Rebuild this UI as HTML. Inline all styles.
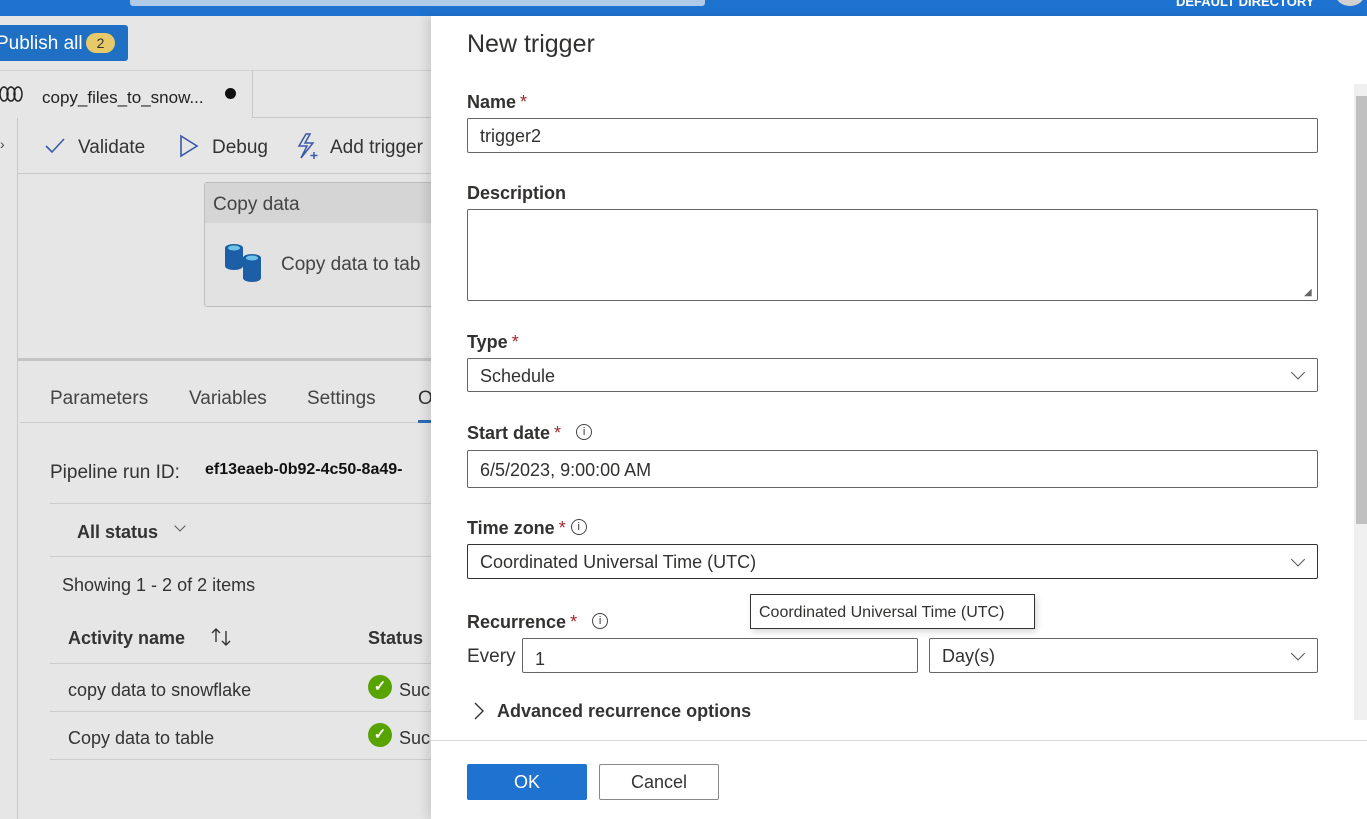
<!DOCTYPE html>
<html><head><meta charset="utf-8"><style>
*{box-sizing:border-box;margin:0;padding:0}
body{width:1367px;height:819px;overflow:hidden;position:relative;background:#e6e6e6;font-family:"Liberation Sans",sans-serif;color:#323130}
.a{position:absolute;white-space:nowrap}
.lbl{font-size:18px;font-weight:bold;color:#323130}
.req{color:#a4262c;font-weight:normal;margin-left:4px}
.inp{position:absolute;border:1px solid #666;border-radius:2px;background:#fff;font-size:18px;padding-left:12px;padding-top:2px;display:flex;align-items:center}
.chev{position:absolute;right:14px;top:50%;width:10px;height:10px;border-right:1.3px solid #555;border-bottom:1.3px solid #555;transform:translateY(-75%) rotate(45deg)}
.info{display:inline-block;width:16px;height:16px;border:1px solid #444;border-radius:50%;font-size:11px;text-align:center;line-height:14px;font-weight:normal;vertical-align:4px}
</style></head><body>
<div class="a" style="left:0;top:0;width:1367px;height:16px;background:#1f73d0"></div>
<div class="a" style="left:130px;top:0;width:575px;height:6px;background:#b0cbe9;border-radius:0 0 3px 3px"></div>
<div class="a" style="left:1176px;top:-6px;font-size:13px;font-weight:bold;color:#fff">DEFAULT DIRECTORY</div>
<div class="a" style="left:1335px;top:-20px;width:30px;height:26px;border-radius:50%;background:#d0d0d0"></div>
<div class="a" style="left:0;top:25px;width:128px;height:36px;background:#1f6fc5;border-radius:0 3px 3px 0;color:#fff;font-size:19px;padding:8px 0 0 0">
<span style="margin-left:-4px">Publish all</span></div>
<div class="a" style="left:86px;top:33px;width:29px;height:20px;background:#e6c968;border-radius:10px;font-size:14px;text-align:center;line-height:20px;color:#333">2</div>
<div class="a" style="left:0;top:70px;width:431px;height:1px;background:#d0d0d0"></div>
<div class="a" style="left:252px;top:70px;width:1px;height:48px;background:#c8c8c8"></div>
<div class="a" style="left:252px;top:117px;width:180px;height:1px;background:#c8c8c8"></div>
<svg class="a" style="left:0;top:85px" width="26" height="18"><g fill="none" stroke="#222" stroke-width="1.5"><ellipse cx="4" cy="9" rx="4" ry="7"/><ellipse cx="11" cy="9" rx="4" ry="7"/><ellipse cx="18" cy="9" rx="4" ry="7"/></g></svg>
<div class="a" style="left:42px;top:88px;font-size:17px;color:#222">copy_files_to_snow...</div>
<div class="a" style="left:225px;top:88px;width:11px;height:11px;border-radius:50%;background:#111"></div>
<div class="a" style="left:0;top:118px;width:18px;height:701px;border-right:1px solid #c8c8c8"></div>
<div class="a" style="left:0;top:136px;font-size:14px;color:#444">›</div>
<svg class="a" style="left:44px;top:137px" width="22" height="18"><path d="M2 9l6 6L20 2" fill="none" stroke="#3a5aa8" stroke-width="1.6"/></svg>
<div class="a" style="left:78px;top:137px;font-size:19px;color:#333">Validate</div>
<svg class="a" style="left:178px;top:134px" width="22" height="24"><path d="M3 2L19 12L3 22Z" fill="none" stroke="#3a5aa8" stroke-width="1.6"/></svg>
<div class="a" style="left:212px;top:137px;font-size:19px;color:#333">Debug</div>
<svg class="a" style="left:296px;top:133px" width="26" height="28"><path d="M10 1L3 13h8L5 25L17 10h-8l5-9z" fill="none" stroke="#3a5aa8" stroke-width="1.5"/><path d="M18 19v7M14.5 22.5h7" stroke="#3a5aa8" stroke-width="1.5"/></svg>
<div class="a" style="left:330px;top:137px;font-size:19px;color:#333">Add trigger</div>
<div class="a" style="left:18px;top:173px;width:413px;height:1px;background:#c8c8c8"></div>
<div class="a" style="left:204px;top:182px;width:230px;height:125px;background:#e2e2e2;border:1px solid #bdbdbd;border-radius:3px"></div>
<div class="a" style="left:205px;top:183px;width:228px;height:40px;background:#d5d5d5"></div>
<div class="a" style="left:213px;top:194px;font-size:19px;color:#444">Copy data</div>
<svg class="a" style="left:223px;top:242px" width="40" height="42"><ellipse cx="11" cy="6" rx="9" ry="4" fill="#1d5fa6"/><rect x="2" y="6" width="18" height="18" fill="#1d5fa6"/><ellipse cx="11" cy="6" rx="6" ry="2.5" fill="#6ec4e8"/><ellipse cx="11" cy="24" rx="9" ry="4" fill="#1d5fa6"/><ellipse cx="29" cy="16" rx="9" ry="4" fill="#1d5fa6"/><rect x="20" y="16" width="18" height="20" fill="#1d5fa6"/><ellipse cx="29" cy="36" rx="9" ry="4" fill="#1d5fa6"/><ellipse cx="29" cy="16" rx="6" ry="2.5" fill="#6ec4e8"/></svg>
<div class="a" style="left:281px;top:254px;font-size:19px;color:#444">Copy data to tab</div>
<div class="a" style="left:18px;top:358px;width:413px;height:3px;background:#c4c4c4"></div>
<div class="a" style="left:50px;top:388px;font-size:19px;color:#444">Parameters</div>
<div class="a" style="left:189px;top:388px;font-size:19px;color:#444">Variables</div>
<div class="a" style="left:307px;top:388px;font-size:19px;color:#444">Settings</div>
<div class="a" style="left:418px;top:388px;font-size:19px;color:#333">O</div>
<div class="a" style="left:20px;top:422px;width:411px;height:1px;background:#ccc"></div>
<div class="a" style="left:418px;top:420px;width:13px;height:3px;background:#2d6bb5"></div>
<div class="a" style="left:50px;top:462px;font-size:19px;color:#333">Pipeline run ID:</div>
<div class="a" style="left:205px;top:461px;font-size:16px;font-weight:bold;color:#111">ef13eaeb-0b92-4c50-8a49-</div>
<div class="a" style="left:50px;top:503px;width:381px;height:1px;background:#ccc"></div>
<div class="a" style="left:77px;top:522px;font-size:18px;font-weight:bold;color:#333">All status</div>
<div class="a" style="left:176px;top:522px;width:8px;height:8px;border-right:1px solid #555;border-bottom:1px solid #555;transform:rotate(45deg)"></div>
<div class="a" style="left:50px;top:556px;width:381px;height:1px;background:#ccc"></div>
<div class="a" style="left:62px;top:575px;font-size:18px;color:#333">Showing 1 - 2 of 2 items</div>
<div class="a" style="left:68px;top:628px;font-size:18px;font-weight:bold;color:#333">Activity name</div>
<svg class="a" style="left:210px;top:627px" width="24" height="20"><path d="M6 15V2M2 6l4-4 4 4M16 4v14M12 14l4 4 4-4" fill="none" stroke="#333" stroke-width="1.4"/></svg>
<div class="a" style="left:368px;top:628px;font-size:18px;font-weight:bold;color:#333">Status</div>
<div class="a" style="left:50px;top:663px;width:381px;height:1px;background:#ccc"></div>
<div class="a" style="left:68px;top:680px;font-size:18px;color:#333">copy data to snowflake</div>
<div class="a" style="left:50px;top:711px;width:381px;height:1px;background:#ccc"></div>
<div class="a" style="left:68px;top:728px;font-size:18px;color:#333">Copy data to table</div>
<div class="a" style="left:50px;top:759px;width:381px;height:1px;background:#ccc"></div>
<div class="a" style="left:368px;top:675px;width:24px;height:24px;border-radius:50%;background:#57a300;color:#fff;font-size:15px;text-align:center;line-height:24px;font-weight:bold">✓</div>
<div class="a" style="left:399px;top:680px;font-size:18px;color:#333">Suc</div>
<div class="a" style="left:368px;top:723px;width:24px;height:24px;border-radius:50%;background:#57a300;color:#fff;font-size:15px;text-align:center;line-height:24px;font-weight:bold">✓</div>
<div class="a" style="left:399px;top:728px;font-size:18px;color:#333">Suc</div>
<div class="a" style="left:431px;top:16px;width:936px;height:803px;background:#fff;box-shadow:-4px 0 10px rgba(0,0,0,.12)"></div>
<div class="a" style="left:467px;top:30px;font-size:25px;color:#323130">New trigger</div>
<div class="a lbl" style="left:467px;top:92px">Name<span class="req">*</span></div>
<div class="inp" style="left:467px;top:118px;width:851px;height:35px">trigger2</div>
<div class="a lbl" style="left:467px;top:183px">Description</div>
<div class="inp" style="left:467px;top:209px;width:851px;height:92px"></div>
<div class="a" style="left:1304px;top:287px;font-size:10px;color:#666">◢</div>
<div class="a lbl" style="left:467px;top:332px">Type<span class="req">*</span></div>
<div class="inp" style="left:467px;top:358px;width:851px;height:34px">Schedule<div class="chev"></div></div>
<div class="a lbl" style="left:467px;top:423px">Start date<span class="req">*</span>&nbsp;&nbsp;&nbsp;<span class="info">i</span></div>
<div class="inp" style="left:467px;top:450px;width:851px;height:38px">6/5/2023, 9:00:00 AM</div>
<div class="a lbl" style="left:467px;top:518px">Time zone<span class="req">*</span>&nbsp;<span class="info">i</span></div>
<div class="inp" style="left:467px;top:544px;width:851px;height:35px;border-color:#333">Coordinated Universal Time (UTC)<div class="chev"></div></div>
<div class="a lbl" style="left:467px;top:612px">Recurrence<span class="req">*</span>&nbsp;&nbsp;&nbsp;<span class="info">i</span></div>
<div class="a" style="left:750px;top:594px;width:285px;height:35px;border:1px solid #333;background:#fff;font-size:16px;padding:9px 0 0 8px;box-shadow:2px 3px 6px rgba(0,0,0,.15)">Coordinated Universal Time (UTC)</div>
<div class="a" style="left:467px;top:646px;font-size:19px;color:#333">Every</div>
<div class="inp" style="left:522px;top:638px;width:396px;height:35px"><span style="margin-top:6px">1</span></div>
<div class="inp" style="left:929px;top:638px;width:389px;height:35px">Day(s)<div class="chev"></div></div>
<svg class="a" style="left:472px;top:701px" width="14" height="20"><path d="M3 2l8 8-8 8" fill="none" stroke="#333" stroke-width="1.4"/></svg>
<div class="a" style="left:497px;top:701px;font-size:18px;font-weight:bold;color:#333">Advanced recurrence options</div>
<div class="a" style="left:1354px;top:84px;width:13px;height:636px;background:#f0f0f0"></div>
<div class="a" style="left:1356px;top:96px;width:11px;height:428px;background:#c0c0c0"></div>
<div class="a" style="left:431px;top:740px;width:936px;height:1px;background:#d8d8d8"></div>
<div class="a" style="left:467px;top:764px;width:120px;height:36px;background:#1f73d0;border-radius:2px;color:#fff;font-size:18px;text-align:center;line-height:36px">OK</div>
<div class="a" style="left:599px;top:764px;width:120px;height:36px;border:1px solid #8a8886;border-radius:2px;font-size:18px;text-align:center;line-height:34px;color:#333">Cancel</div>
</body></html>
